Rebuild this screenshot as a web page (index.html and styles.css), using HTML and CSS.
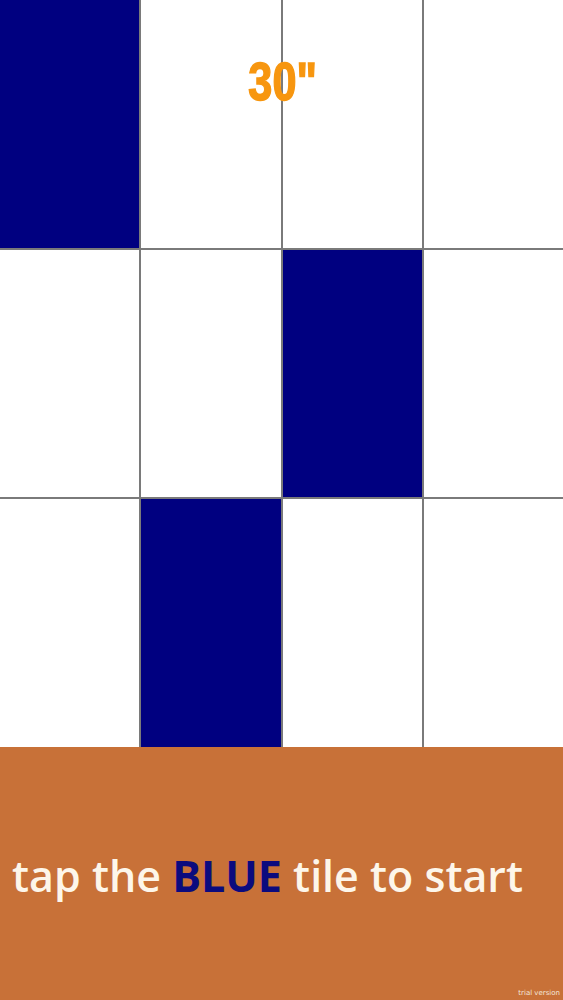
FILE: index.html
```html
<!DOCTYPE html>
<html>
<head>
<meta charset="utf-8">
<link rel="stylesheet" href="styles.css">
</head>
<body>
<div class="screen">
  <div class="board">
    <div class="tile blue"></div><div class="tile"></div><div class="tile"></div><div class="tile"></div>
    <div class="tile"></div><div class="tile"></div><div class="tile blue"></div><div class="tile"></div>
    <div class="tile"></div><div class="tile blue"></div><div class="tile"></div><div class="tile"></div>
    <div class="timer"><span class="timer-text">30"</span></div>
  </div>
  <div class="panel">
    <div class="hint">tap the <span class="accent">BLUE</span> tile to start</div>
    <div class="trial">trial version</div>
  </div>
</div>
</body>
</html>
```
FILE: styles.css
```css
html, body {
  margin: 0;
  padding: 0;
}
body {
  width: 563px;
  height: 1000px;
  overflow: hidden;
  background: #ffffff;
}
.screen {
  display: flex;
  flex-direction: column;
  width: 563px;
  height: 1000px;
}
.board {
  position: relative;
  height: 747px;
  display: grid;
  grid-template-columns: repeat(4, 1fr);
  grid-template-rows: repeat(3, 1fr);
  gap: 2px;
  background: #7a7a7a;
}
.tile {
  background: #ffffff;
}
.tile.blue {
  background: #000080;
}
.timer {
  position: absolute;
  top: 51px;
  left: 0;
  right: 0;
  text-align: center;
  font-family: "Liberation Sans", sans-serif;
  font-weight: 700;
  font-size: 54px;
  line-height: 60px;
  color: #f7960f;
}
.timer-text {
  display: inline-block;
  transform: scaleX(0.8);
  -webkit-text-stroke: 1.5px #f7960f;
  padding-left: 2px;
}
.panel {
  position: relative;
  flex: 1;
  background: #c87138;
  display: flex;
  align-items: center;
  padding-left: 12px;
}
.hint {
  font-family: "Open Sans", sans-serif;
  font-weight: 600;
  font-size: 43px;
  color: #fdf6ea;
  margin-top: 4px;
  letter-spacing: 0;
}
.accent {
  color: #0b0b7e;
  font-weight: 700;
}
.trial {
  position: absolute;
  right: 3px;
  bottom: 3px;
  font-family: "DejaVu Sans", sans-serif;
  font-size: 7px;
  color: #f3e6da;
}
```
